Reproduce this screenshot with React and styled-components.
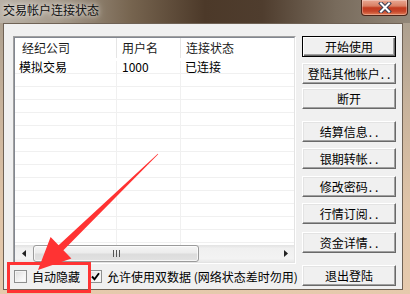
import React from 'react';
import styled, { createGlobalStyle, css } from 'styled-components';

const Global = createGlobalStyle`
  html, body { margin: 0; padding: 0; }
  body {
    width: 410px; height: 294px; overflow: hidden;
    font-family: "Noto Sans CJK SC", "Noto Sans", sans-serif;
    font-size: 12px;
  }
`;

const Window = styled.div`
  position: relative;
  width: 410px;
  height: 294px;
  display: flex;
  flex-direction: column;
  background: linear-gradient(180deg, #a59a8b 0%, #c7b29b 35%, #dfc4a8 70%, #e6caad 100%);
  overflow: hidden;
`;

const TitleBar = styled.div`
  height: 23px;
  flex: none;
  display: flex;
  justify-content: space-between;
  align-items: flex-start;
  background: linear-gradient(90deg, #b9b1a6 0%, #a59a8b 14%, #76644f 32%, #4c3929 50%, #4f3d2e 64%, #786b5c 82%, #928779 100%);
`;

const Title = styled.div`
  padding: 3px 0 0 3px;
  font-size: 12px;
  line-height: 14px;
  color: #111;
  text-shadow: 0 0 5px rgba(255,255,255,0.9), 0 0 10px rgba(255,255,255,0.6);
`;

const CloseButton = styled.div`
  width: 47px;
  height: 16px;
  margin-right: 2px;
  box-sizing: border-box;
  border: 1px solid #4a2418;
  border-top: none;
  border-radius: 0 0 4px 4px;
  background: linear-gradient(180deg, #e9a893 0%, #d98064 40%, #c23b1e 52%, #c5452a 75%, #e27d55 100%);
  box-shadow: inset 0 0 0 1px rgba(255,255,255,0.3);
  display: flex;
  align-items: center;
  justify-content: center;
`;

const Client = styled.div`
  flex: 1;
  margin: 0 7px 4px 3px;
  border: 1px solid #6f6255;
  background: #f0f0f0;
  display: flex;
  gap: 6px;
  padding: 12px 6px 0 9px;
  min-height: 0;
`;

const LeftColumn = styled.div`
  width: 283px;
  display: flex;
  flex-direction: column;
`;

const ListOuter = styled.div`
  height: 228px;
  box-sizing: border-box;
  border-style: solid;
  border-width: 1px;
  border-color: #a0a0a0 #ffffff #ffffff #a0a0a0;
  display: flex;
`;

const ListInner = styled.div`
  flex: 1;
  border-style: solid;
  border-width: 1px;
  border-color: #828790 #e3e3e3 #e3e3e3 #828790;
  background: #fff;
  display: flex;
  flex-direction: column;
  overflow: hidden;
  min-width: 0;
`;

const HeaderRow = styled.div`
  display: flex;
  height: 20px;
  flex: none;
  background: #fff;
`;

const HeaderCell = styled.div`
  box-sizing: border-box;
  width: ${p => p.$w ? `${p.$w}px` : 'auto'};
  flex: ${p => p.$w ? 'none' : '1'};
  padding-left: ${p => p.$pl}px;
  line-height: 20px;
  color: #1a1a1a;
  white-space: nowrap;
  border-right: ${p => p.$w ? '1px solid #e5e5e5' : 'none'};
`;

const Rows = styled.div`
  flex: 1;
  padding-top: 3px;
  overflow: hidden;
  min-height: 0;
`;

const Row = styled.div`
  display: flex;
  height: 13px;
  box-sizing: border-box;
  border-bottom: 1px solid #f0f0f0;
`;

const Cell = styled.div`
  box-sizing: border-box;
  width: ${p => p.$w ? `${p.$w}px` : 'auto'};
  flex: ${p => p.$w ? 'none' : '1'};
  padding-left: ${p => p.$pl}px;
  line-height: 12px;
  color: #000;
  white-space: nowrap;
  border-right: ${p => p.$w ? '1px solid #f0f0f0' : 'none'};
`;

const HScroll = styled.div`
  height: 17px;
  flex: none;
  display: flex;
  align-items: stretch;
  background: linear-gradient(180deg, #e3e3e3 0%, #f0f0f0 20%, #f3f3f3 80%, #e8e8e8 100%);
`;

const ScrollArrow = styled.div`
  width: 17px;
  flex: none;
  display: flex;
  align-items: center;
  justify-content: center;
`;

const Track = styled.div`
  flex: 1;
  display: flex;
  align-items: stretch;
  padding: 0 0 0 1px;
`;

const Thumb = styled.div`
  width: 166px;
  box-sizing: border-box;
  border: 1px solid #9b9b9b;
  border-radius: 3px;
  background: linear-gradient(180deg, #f5f5f5 0%, #ececec 45%, #dcdcdc 55%, #e2e2e2 100%);
  box-shadow: inset 0 0 0 1px rgba(255,255,255,0.7);
  display: flex;
  align-items: center;
  justify-content: center;
`;

const CheckRow = styled.div`
  flex: 1;
  display: flex;
  align-items: center;
  padding: 0 0 0 1px;
  white-space: nowrap;
`;

const CheckItem = styled.label`
  display: flex;
  align-items: center;
  margin-right: ${p => p.$mr || 0}px;
  color: #000;
  font-size: 12px;
  line-height: 14px;
`;

const Box = styled.span`
  width: 13px;
  height: 13px;
  box-sizing: border-box;
  border: 1px solid #8e8f8f;
  background: linear-gradient(135deg, #dcdcdc 0%, #f4f4f4 60%, #ffffff 100%);
  box-shadow: inset 0 0 0 1px #f4f4f4;
  margin-right: 5px;
  display: flex;
  align-items: center;
  justify-content: center;
  flex: none;
`;

const RightColumn = styled.div`
  width: 94px;
  display: flex;
  flex-direction: column;
`;

const Button = styled.button`
  width: 94px;
  height: 21px;
  flex: none;
  margin-top: ${p => p.$mt}px;
  box-sizing: border-box;
  padding: 0;
  font-family: "Noto Sans CJK SC", sans-serif;
  font-size: 12px;
  line-height: 17px;
  color: #000;
  background: #f0f0f0;
  border: 1px solid;
  border-color: #ffffff #696969 #696969 #ffffff;
  box-shadow: inset -1px -1px 0 #a0a0a0, inset 1px 1px 0 #e3e3e3;
  white-space: nowrap;
  overflow: hidden;
  ${p => p.$default && css`
    border: 1px solid #000;
    box-shadow: inset 1px 1px 0 #fff, inset -1px -1px 0 #696969, inset -2px -2px 0 #a0a0a0;
  `}
`;

const Dots = styled.span`
  letter-spacing: 3px;
  margin-left: 1px;
  margin-right: -3px;
`;

const Overlay = styled.svg`
  position: absolute;
  left: 0;
  top: 0;
  pointer-events: none;
`;

const columns = [
  { w: 102, hp: 7, rp: 4 },
  { w: 64, hp: 5, rp: 5 },
  { w: 0, hp: 5, rp: 4 },
];

const headers = ['经纪公司', '用户名', '连接状态'];
const data = [['模拟交易', '1000', '已连接']];
const rowCount = 16;

const buttons = [
  { label: '开始使用', mt: 0, def: true },
  { label: '登陆其他帐户', dots: true, mt: 6 },
  { label: '断开', mt: 4 },
  { label: '结算信息', dots: true, mt: 12 },
  { label: '银期转帐', dots: true, mt: 6 },
  { label: '修改密码', dots: true, mt: 7 },
  { label: '行情订阅', dots: true, mt: 6 },
  { label: '资金详情', dots: true, mt: 8 },
  { label: '退出登陆', mt: 12 },
];

export default function App() {
  const rows = Array.from({ length: rowCount }, (_, i) => data[i] || ['', '', '']);
  return (
    <>
      <Global />
      <Window>
        <TitleBar>
          <Title>交易帐户连接状态</Title>
          <CloseButton>
            <svg width="14" height="11" viewBox="0 0 14 11">
              <path d="M3 1.5 L11 9.5 M11 1.5 L3 9.5" stroke="#3a3f55" strokeWidth="4" strokeLinecap="square" />
              <path d="M3 1.5 L11 9.5 M11 1.5 L3 9.5" stroke="#ffffff" strokeWidth="2" strokeLinecap="square" />
            </svg>
          </CloseButton>
        </TitleBar>
        <Client>
          <LeftColumn>
            <ListOuter>
              <ListInner>
                <HeaderRow>
                  {headers.map((h, i) => (
                    <HeaderCell key={h} $w={columns[i].w} $pl={columns[i].hp}>{h}</HeaderCell>
                  ))}
                </HeaderRow>
                <Rows>
                  {rows.map((r, ri) => (
                    <Row key={ri}>
                      {r.map((c, ci) => (
                        <Cell key={ci} $w={columns[ci].w} $pl={columns[ci].rp}>{c}</Cell>
                      ))}
                    </Row>
                  ))}
                </Rows>
                <HScroll>
                  <ScrollArrow>
                    <svg width="4" height="7" viewBox="0 0 4 7"><polygon points="4,0 0,3.5 4,7" fill="#222" /></svg>
                  </ScrollArrow>
                  <Track>
                    <Thumb>
                      <svg width="7" height="7" viewBox="0 0 7 7">
                        <path d="M0.5 0 V7 M3.5 0 V7 M6.5 0 V7" stroke="#555" strokeWidth="1" />
                      </svg>
                    </Thumb>
                  </Track>
                  <ScrollArrow>
                    <svg width="4" height="7" viewBox="0 0 4 7"><polygon points="0,0 4,3.5 0,7" fill="#222" /></svg>
                  </ScrollArrow>
                </HScroll>
              </ListInner>
            </ListOuter>
            <CheckRow>
              <CheckItem $mr={9}>
                <Box />
                自动隐藏
              </CheckItem>
              <CheckItem>
                <Box>
                  <svg width="9" height="9" viewBox="0 0 9 9">
                    <polyline points="1,4.5 3.5,7.2 8,1.2" fill="none" stroke="#000" strokeWidth="1.9" />
                  </svg>
                </Box>
                允许使用双数据 (网络状态差时勿用)
              </CheckItem>
            </CheckRow>
          </LeftColumn>
          <RightColumn>
            {buttons.map(b => (
              <Button key={b.label} $mt={b.mt} $default={b.def}>
                {b.label}
                {b.dots && <Dots>..</Dots>}
              </Button>
            ))}
          </RightColumn>
        </Client>
        <Overlay width="410" height="294" viewBox="0 0 410 294">
          <rect x="8.5" y="263.5" width="81" height="28" fill="none" stroke="#ff3333" strokeWidth="3" />
          <polygon
            points="158.2,154.2 63.4,250.3 71.4,258.6 38,270 50.6,237 58.6,245.3 157.8,153.8"
            fill="#ff3333"
          />
        </Overlay>
      </Window>
    </>
  );
}
